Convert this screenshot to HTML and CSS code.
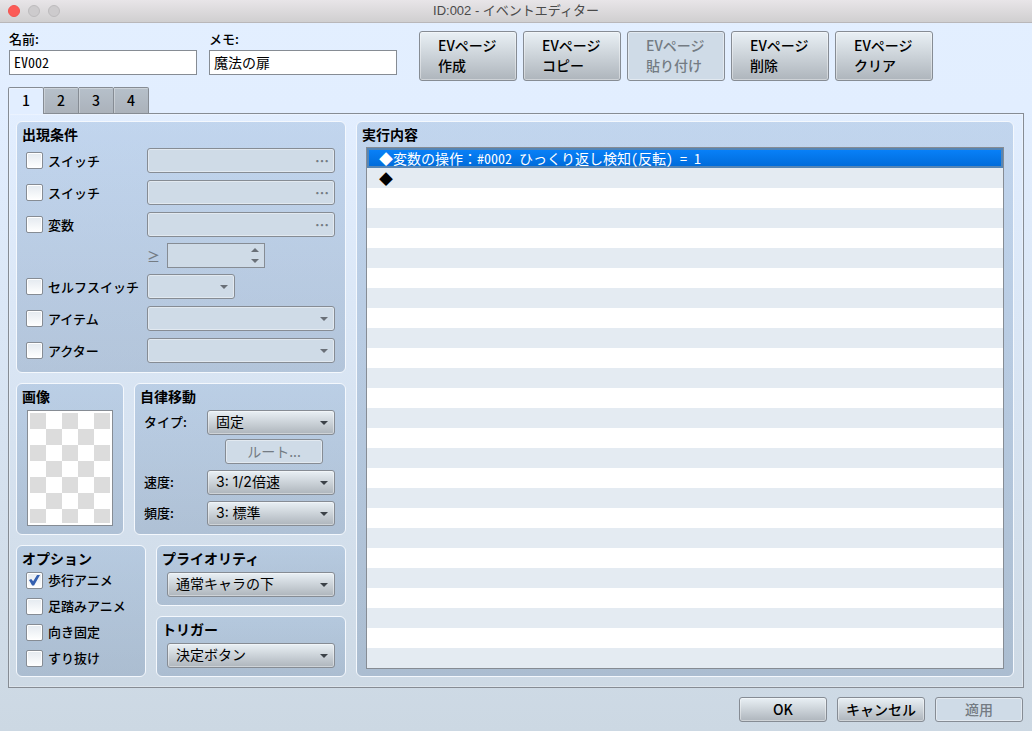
FILE: index.html
```
<!DOCTYPE html>
<html lang="ja">
<head>
    <meta charset="UTF-8">
    <meta name="viewport" content="width=device-width, initial-scale=1.0">
    <title>ID:002 - イベントエディター</title>
    <link rel="stylesheet" href="styles.css">
</head>
<body>

<header class="titlebar">
    <div class="lights">
        <span class="light close"></span>
        <span class="light"></span>
        <span class="light"></span>
    </div>
    <h1>ID:002 - イベントエディター</h1>
</header>

<form class="editor">
    <div class="top">
        <div class="field">
            <label for="name">名前:</label>
            <input type="text" id="name" value="EV002">
        </div>
        <div class="field">
            <label for="memo">メモ:</label>
            <input type="text" id="memo" value="魔法の扉">
        </div>
        <div class="page-buttons">
            <button type="button" class="btn">EVページ<br>作成</button>
            <button type="button" class="btn">EVページ<br>コピー</button>
            <button type="button" class="btn" disabled>EVページ<br>貼り付け</button>
            <button type="button" class="btn">EVページ<br>削除</button>
            <button type="button" class="btn">EVページ<br>クリア</button>
        </div>
    </div>

    <div class="tabs" role="tablist">
        <button type="button" class="tab active" role="tab" aria-selected="true">1</button>
        <button type="button" class="tab" role="tab">2</button>
        <button type="button" class="tab" role="tab">3</button>
        <button type="button" class="tab" role="tab">4</button>
    </div>

    <main class="page">
        <div class="settings">
            <!-- Condiciones de aparición -->
            <section class="group conditions">
                <h2>出現条件</h2>
                <div class="row">
                    <label class="check"><input type="checkbox">スイッチ</label>
                    <button type="button" class="btn picker" disabled>…</button>
                </div>
                <div class="row">
                    <label class="check"><input type="checkbox">スイッチ</label>
                    <button type="button" class="btn picker" disabled>…</button>
                </div>
                <div class="row tight">
                    <label class="check"><input type="checkbox">変数</label>
                    <button type="button" class="btn picker" disabled>…</button>
                </div>
                <div class="row tight">
                    <span></span>
                    <div class="compare">
                        <label for="variable-value">≥</label>
                        <div class="spinner"><input type="number" id="variable-value" disabled></div>
                    </div>
                </div>
                <div class="row">
                    <label class="check"><input type="checkbox">セルフスイッチ</label>
                    <div class="select short"><select aria-label="セルフスイッチ" disabled></select></div>
                </div>
                <div class="row">
                    <label class="check"><input type="checkbox">アイテム</label>
                    <div class="select"><select aria-label="アイテム" disabled></select></div>
                </div>
                <div class="row">
                    <label class="check"><input type="checkbox">アクター</label>
                    <div class="select"><select aria-label="アクター" disabled></select></div>
                </div>
            </section>

            <div class="pair">
                <section class="group image">
                    <h2>画像</h2>
                    <div class="preview"></div>
                </section>

                <section class="group movement">
                    <h2>自律移動</h2>
                    <div class="move-grid">
                        <label for="move-type">タイプ:</label>
                        <div class="select"><select id="move-type"><option>固定</option></select></div>
                        <button type="button" class="btn route" disabled>ルート...</button>
                        <label for="move-speed">速度:</label>
                        <div class="select"><select id="move-speed"><option>3: 1/2倍速</option></select></div>
                        <label for="move-freq">頻度:</label>
                        <div class="select"><select id="move-freq"><option>3: 標準</option></select></div>
                    </div>
                </section>
            </div>

            <div class="pair">
                <section class="group options">
                    <h2>オプション</h2>
                    <label class="check"><input type="checkbox" checked>歩行アニメ</label>
                    <label class="check"><input type="checkbox">足踏みアニメ</label>
                    <label class="check"><input type="checkbox">向き固定</label>
                    <label class="check"><input type="checkbox">すり抜け</label>
                </section>

                <div class="stack">
                    <section class="group single">
                        <h2>プライオリティ</h2>
                        <div class="select"><select aria-label="プライオリティ"><option>通常キャラの下</option></select></div>
                    </section>
                    <section class="group single">
                        <h2>トリガー</h2>
                        <div class="select"><select aria-label="トリガー"><option>決定ボタン</option></select></div>
                    </section>
                </div>
            </div>
        </div>

        <!-- Lista de comandos -->
        <section class="group contents">
            <h2>実行内容</h2>
            <ul class="commands">
                <li class="selected">◆変数の操作<span class="full">：</span>#0002 ひっくり返し検知(反転) = 1</li>
                <li>◆</li>
            </ul>
        </section>
    </main>

    <footer class="actions">
        <button type="button" class="btn">OK</button>
        <button type="button" class="btn">キャンセル</button>
        <button type="button" class="btn" disabled>適用</button>
    </footer>
</form>

</body>
</html>
```
FILE: styles.css
```
* {
    box-sizing: border-box;
}

body {
    margin: 0;
    min-height: 100vh;
    display: flex;
    flex-direction: column;
    background: linear-gradient(#e3efff 0, #e2eeff 15%, #ccd8e3 100%);
    font-family: "Noto Sans CJK JP", sans-serif;
    font-size: 13px;
    font-weight: 500;
    line-height: 20px;
    color: #000;
}

h1, h2, ul {
    margin: 0;
    padding: 0;
}

button, input, select {
    margin: 0;
    font: inherit;
    font-size: 14px;
    color: inherit;
}

/* Barra de título */
.titlebar {
    display: flex;
    position: relative;
    align-items: center;
    justify-content: center;
    height: 23px;
    border-bottom: 1px solid #b9b7b9;
    background: linear-gradient(#e8e5e8, #d0cfd0);
}

.titlebar h1 {
    font-family: "Liberation Sans", "Noto Sans CJK JP", sans-serif;
    font-size: 13px;
    font-weight: 400;
    color: #4a4a4a;
}

.lights {
    position: absolute;
    left: 8px;
    display: flex;
    gap: 8px;
}

.light {
    width: 12px;
    height: 12px;
    border: 1px solid #bdbbbd;
    border-radius: 50%;
    background: #cdcbcd;
}

.light.close {
    border-color: #f2544f;
    background: #fc5b57;
}

.editor {
    flex: 1;
    display: flex;
    flex-direction: column;
    padding: 8px 8px 9px;
}

/* Nombre, memo y botones de página */
.top {
    display: flex;
    gap: 12px;
    padding-left: 1px;
}

.field {
    width: 188px;
}

.field label {
    display: block;
    height: 19px;
    line-height: 16px;
}

.field input {
    display: block;
    width: 100%;
    height: 25px;
    padding: 0 4px 2px;
    border: 1px solid #868c94;
    background: #fff;
    font-weight: 400;
    font-feature-settings: "hwid";
}

.page-buttons {
    display: flex;
    gap: 6px;
    margin-left: 10px;
}

.btn {
    height: 25px;
    padding: 0 0 2px;
    border: 1px solid #868c94;
    border-radius: 3px;
    background: linear-gradient(#e9f0f5, #aeb5bc);
    box-shadow: inset 0 0 0 1px rgba(255, 255, 255, 0.4);
}

.btn:disabled {
    background: #cfdbe7;
    color: #747b83;
}

.page-buttons .btn {
    width: 98px;
    height: 50px;
    padding-left: 18px;
    line-height: 20px;
    text-align: left;
}

/* Pestañas */
.tabs {
    display: flex;
    margin-top: 6px;
    position: relative;
    z-index: 1;
}

.tab {
    width: 35px;
    height: 27px;
    padding: 0 0 2px;
    border: 1px solid #868c94;
    border-left-width: 0;
    border-radius: 0 2px 0 0;
    background: linear-gradient(#b6c0ca, #abb2bb);
    box-shadow: inset 1px 1px 0 rgba(255, 255, 255, 0.3);
}

.tab.active {
    width: 36px;
    border-left-width: 1px;
    border-bottom-width: 0;
    border-radius: 2px 2px 0 0;
    background: #e2eeff;
}

.page {
    flex: 1;
    display: flex;
    gap: 10px;
    margin-top: -1px;
    padding: 7px 9px 10px 7px;
    border: 1px solid #868c94;
    box-shadow: inset 0 0 0 1px rgba(255, 255, 255, 0.3);
}

.settings {
    display: flex;
    flex-direction: column;
    gap: 10px;
    width: 330px;
}

/* Grupos */
.group {
    padding: 3px 10px 8px 9px;
    border: 1px solid #f4f8fd;
    border-radius: 6px;
    background: linear-gradient(rgba(110, 150, 195, 0.28), rgba(81, 114, 154, 0.28));
}

.group h2 {
    height: 23px;
    margin-left: -4px;
    font-size: 14px;
    font-weight: 700;
    line-height: 18px;
    white-space: nowrap;
}

.conditions {
    padding-bottom: 9px;
}

.row {
    display: grid;
    grid-template-columns: 121px 1fr;
    height: 32px;
}

.row.tight {
    height: 31px;
}

.row:last-child {
    height: 25px;
}

.check {
    display: flex;
    align-items: center;
    gap: 5px;
    height: 25px;
    white-space: nowrap;
}

.check input {
    appearance: none;
    display: grid;
    place-items: center;
    width: 17px;
    height: 17px;
    border: 1px solid #868c94;
    border-radius: 2px;
    background: linear-gradient(#e4eaf0, #fff);
    box-shadow: inset 0 0 0 1px #fff;
}

.check input:checked::after {
    content: "";
    width: 11px;
    height: 11px;
    background: #3560b0;
    clip-path: polygon(0 50%, 20% 40%, 38% 62%, 76% 0, 100% 4%, 46% 100%, 28% 100%);
}

.picker {
    padding-right: 5px;
    font-weight: 700;
    line-height: 22px;
    text-align: right;
}

.compare {
    display: flex;
    gap: 10px;
    color: #747b83;
}

.compare label {
    width: 10px;
    line-height: 25px;
}

.spinner {
    position: relative;
    width: 98px;
}

.spinner input {
    appearance: textfield;
    width: 100%;
    height: 25px;
    border: 1px solid #868c94;
    background: #cfdbe7;
}

.spinner::before, .spinner::after {
    content: "";
    position: absolute;
    right: 6px;
    border: 4px solid transparent;
}

.spinner::before {
    top: 5px;
    border-top-width: 0;
    border-bottom-color: #6a7078;
}

.spinner::after {
    top: 16px;
    border-bottom-width: 0;
    border-top-color: #6a7078;
}

.select {
    position: relative;
    height: 25px;
}

.select.short {
    width: 88px;
}

.select select {
    appearance: none;
    display: block;
    width: 100%;
    height: 25px;
    padding: 0 20px 2px 8px;
    border: 1px solid #868c94;
    border-radius: 3px;
    background: linear-gradient(#e9f0f5, #aeb5bc);
    box-shadow: inset 0 0 0 1px rgba(255, 255, 255, 0.4);
    font-family: Inter, "Noto Sans CJK JP", sans-serif;
    font-weight: 400;
}

.select select:disabled {
    background: #cfdbe7;
    opacity: 1;
}

.select::after {
    content: "";
    position: absolute;
    top: 11px;
    right: 7px;
    border: 4px solid transparent;
    border-bottom-width: 0;
    border-top-color: #3c4248;
    pointer-events: none;
}

.select:has(:disabled)::after {
    border-top-color: #6a7078;
}

.pair {
    display: flex;
    gap: 10px;
}

.image {
    width: 108px;
    padding-left: 10px;
}

.group.image h2, .group.single h2 {
    margin-left: -5px;
}

/* Vista previa transparente */
.preview {
    width: 86px;
    height: 116px;
    border: 1px solid #868c94;
    padding: 2px;
    background: repeating-conic-gradient(#fff 0 25%, #dcdcdc 0 50%) 0 0 / 32px 32px content-box, #fff;
}

.movement {
    flex: 1;
}

.move-grid {
    display: grid;
    grid-template-columns: 63px 1fr;
    row-gap: 6px;
}

.move-grid label {
    line-height: 23px;
}

.route {
    grid-column: 2;
    width: 98px;
    margin: -2px 0 0 18px;
    font-weight: 400;
}

.options {
    width: 130px;
    padding-bottom: 5px;
}

.options .check {
    height: 26px;
}

.group.options h2 {
    height: 18px;
}

.stack {
    flex: 1;
    display: flex;
    flex-direction: column;
    gap: 10px;
}

.single {
    flex: 1;
    padding-left: 10px;
}

/* Comandos */
.contents {
    flex: 1;
    display: flex;
    flex-direction: column;
    padding-right: 9px;
    padding-bottom: 7px;
}

.group.contents h2 {
    height: 22px;
}

.commands {
    flex: 1;
    border: 1px solid #868c94;
    background: repeating-linear-gradient(#fff 0 20px, #e4ebf2 20px 40px);
    list-style: none;
    font-size: 14px;
    font-weight: 400;
    font-feature-settings: "hwid";
}

.commands li {
    height: 20px;
    padding-left: 12px;
    line-height: 20px;
}

.commands .selected {
    padding-left: 10px;
    border: 2px solid #5585b5;
    background: linear-gradient(#0880f8, #006cdb);
    color: #fff;
    line-height: 16px;
}

.full {
    font-feature-settings: normal;
}

.actions {
    display: flex;
    justify-content: flex-end;
    gap: 10px;
    margin-top: 9px;
    padding-right: 1px;
}

.actions .btn {
    width: 88px;
}
```
